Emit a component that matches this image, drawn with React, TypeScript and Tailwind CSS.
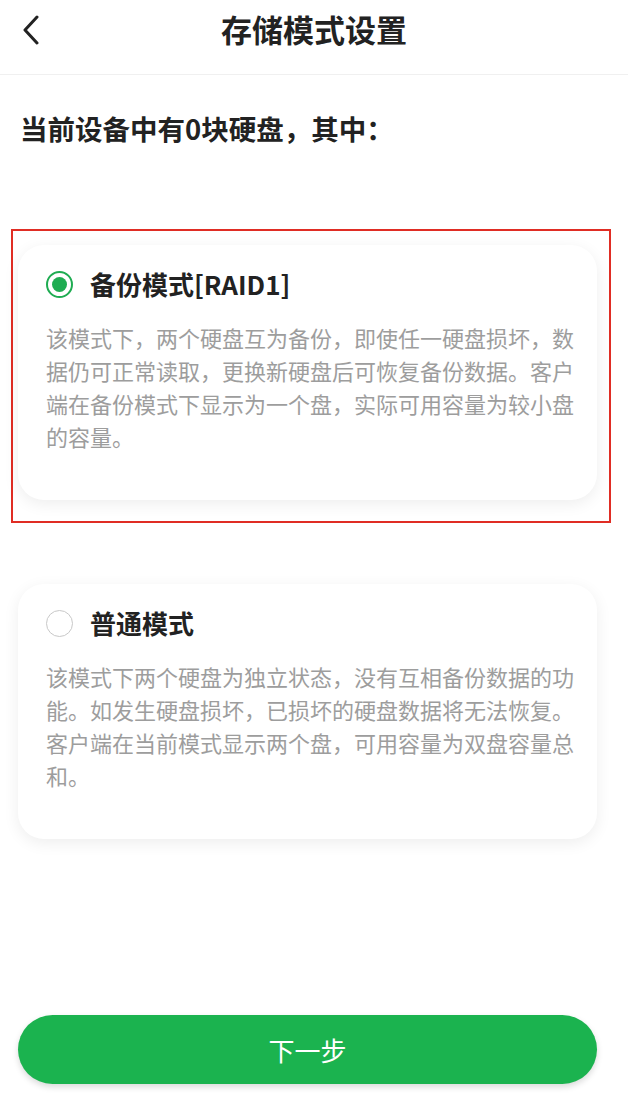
const font = { fontFamily: '"Noto Sans CJK SC", "Noto Sans", sans-serif' };

interface Mode {
  id: string;
  title: string;
  desc: string;
}

const modes: Mode[] = [
  {
    id: "raid1",
    title: "备份模式[RAID1]",
    desc: "该模式下，两个硬盘互为备份，即使任一硬盘损坏，数据仍可正常读取，更换新硬盘后可恢复备份数据。客户端在备份模式下显示为一个盘，实际可用容量为较小盘的容量。",
  },
  {
    id: "normal",
    title: "普通模式",
    desc: "该模式下两个硬盘为独立状态，没有互相备份数据的功能。如发生硬盘损坏，已损坏的硬盘数据将无法恢复。客户端在当前模式显示两个盘，可用容量为双盘容量总和。",
  },
];

function Radio({ checked }: { checked: boolean }) {
  return checked ? (
    <span className="flex h-[27px] w-[27px] shrink-0 items-center justify-center rounded-full border-2 border-[#1fac52]">
      <span className="h-[15px] w-[15px] rounded-full bg-[#1fac52]" />
    </span>
  ) : (
    <span className="h-[27px] w-[27px] shrink-0 rounded-full border-[1.5px] border-[#c8c8c8]" />
  );
}

function ModeCard({ mode, checked }: { mode: Mode; checked: boolean }) {
  return (
    <div className="h-[255px] w-[579px] rounded-[26px] bg-white pt-[22px] pr-[16px] pl-[28px] shadow-[0_4px_16px_rgba(0,0,0,0.07)]">
      <div className="flex h-[34px] items-center gap-[17px]">
        <Radio checked={checked} />
        <span className="text-[26px] font-bold leading-[34px] text-[#222]">{mode.title}</span>
      </div>
      <p className="mt-[20px] text-[22px] leading-[33px] text-[#9d9d9d]">{mode.desc}</p>
    </div>
  );
}

export default function App() {
  return (
    <div className="flex h-[1113px] w-[628px] flex-col bg-white" style={font}>
      <header className="relative flex h-[75px] shrink-0 items-center justify-center border-b border-[#f0f0f0]">
        <svg className="absolute left-[20px] top-[15px]" width="22" height="30" viewBox="0 0 22 30" fill="none">
          <path d="M17 2 L5 15 L17 28" stroke="#222" strokeWidth="3" strokeLinecap="round" strokeLinejoin="round" />
        </svg>
        <h1 className="-mt-[15px] text-[31px] font-bold text-[#222]">存储模式设置</h1>
      </header>

      <h2 className="mt-[36px] px-[20px] text-[27.5px] font-bold leading-[34px] text-[#222]">
        当前设备中有0块硬盘，其中：
      </h2>

      <div className="ml-[11px] mt-[84px] w-[600px] border-2 border-[#e02d24] pt-[14px] pr-[12px] pb-[21px] pl-[5px]">
        <ModeCard mode={modes[0]} checked />
      </div>

      <div className="mt-[61px] pl-[18px]">
        <ModeCard mode={modes[1]} checked={false} />
      </div>

      <div className="mt-auto pl-[18px] pb-[29px]">
        <button className="flex h-[69px] w-[579px] items-center justify-center rounded-full bg-[#1bb34f] text-[26px] text-white shadow-[0_3px_6px_rgba(0,0,0,0.15)]">
          下一步
        </button>
      </div>
    </div>
  );
}
